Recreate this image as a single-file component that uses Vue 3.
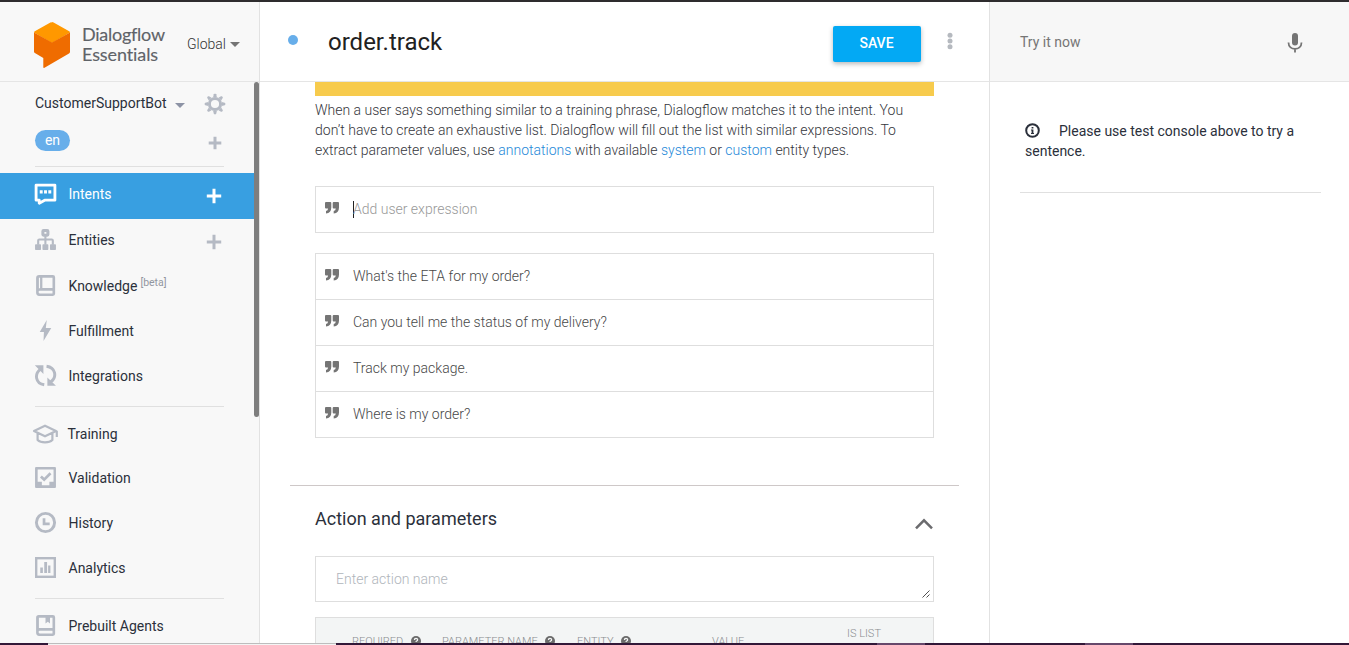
<script setup>
const primary = [
  { label: 'Entities', icon: 'entities', add: true },
  { label: 'Knowledge', icon: 'knowledge', beta: true },
  { label: 'Fulfillment', icon: 'fulfillment' },
  { label: 'Integrations', icon: 'integrations' },
]
const secondary = [
  { label: 'Training', icon: 'training' },
  { label: 'Validation', icon: 'validation' },
  { label: 'History', icon: 'history' },
  { label: 'Analytics', icon: 'analytics' },
]
const phrases = [
  "What's the ETA for my order?",
  'Can you tell me the status of my delivery?',
  'Track my package.',
  'Where is my order?',
]
const columns = [
  { label: 'Required', help: true },
  { label: 'Parameter name', help: true },
  { label: 'Entity', help: true },
  { label: 'Value' },
  { label: 'Is list', top: true },
]
</script>

<template>
  <div class="screen">
    <div class="top-strip"></div>
    <div class="body">
      <aside class="sidebar">
        <header class="brand">
          <svg class="logo" width="38" height="48" viewBox="0 0 38 48">
            <path d="M19 1.5Q18.200 1.100 17.400 1.500L1.800 10.300Q1 10.800 1 11.600L19 22L37 11.600Q37 10.800 36.200 10.300L20.600 1.500Q19.800 1.100 19 1.100Z" fill="#ff9800" />
            <path d="M1 11.400V30.600Q1 31.600 1.900 32.100L10.300 37V46.100Q10.300 47.500 11.500 46.800L36 32.500Q37 31.900 37 30.800V11.400L19 21.600Z" fill="#ef6c00" />
          </svg>
          <div class="brand-name"><span>Dialogflow</span><span class="second">Essentials</span></div>
          <div class="region">Global</div>
          <i class="caret"></i>
        </header>
        <nav class="nav">
          <div class="agent">
            <span class="agent-name">CustomerSupportBot</span>
            <i class="caret agent-caret"></i>
            <svg class="gear" width="22" height="22" viewBox="0 0 22 22">
              <g fill="#b5bac4">
                <path v-for="n in 8" :key="n" d="M9.100 4.200L9.800 1.300Q10 .7 10.500 .7H11.500Q12 .7 12.200 1.300L12.900 4.200Z" :transform="`rotate(${n * 45} 11 11)`" />
              </g>
              <circle cx="11" cy="11" r="5.600" fill="none" stroke="#b5bac4" stroke-width="3" />
            </svg>
          </div>
          <div class="language">
            <span class="chip">en</span>
            <svg class="plus" width="14" height="14" viewBox="0 0 14 14"><path d="M7 .7V13.300M.7 7H13.300" /></svg>
          </div>
          <hr class="rule first" />
          <div class="item active">
            <svg class="icon" width="23" height="23" viewBox="0 0 22 22">
              <path d="M2 2H20V16.400H10.200L5 19.300V16.400H2Z" fill="none" stroke="#fff" stroke-width="2.700" stroke-linejoin="round" />
              <path d="M5.500 7H8.300V10H5.500ZM9.600 7H12.400V10H9.600ZM13.700 7H16.500V10H13.700Z" fill="#fff" />
            </svg>
            <span>Intents</span>
            <svg class="plus big" width="16" height="16" viewBox="0 0 16 16"><path d="M8 .8V15.200M.8 8H15.200" /></svg>
          </div>
          <div v-for="item in primary" :key="item.label" class="item" :class="item.icon">
            <svg v-if="item.icon === 'entities'" class="icon" width="23" height="23" viewBox="0 0 22 22">
              <rect x="8.500" y="2.400" width="4.800" height="4.500" rx=".6" fill="none" stroke="#b5bac4" stroke-width="2.900" />
              <path d="M10.900 7V16M4 16V12Q4 11 5 11H17Q18 11 18 12V16" fill="none" stroke="#b5bac4" stroke-width="2" />
              <path d="M1.700 15.500H6Q6.700 15.500 6.700 16.200V20.300Q6.700 21 6 21H1.700Q1 21 1 20.300V16.200Q1 15.500 1.700 15.500ZM8.800 15.500H13Q13.700 15.500 13.700 16.200V20.300Q13.700 21 13 21H8.800Q8.100 21 8.100 20.300V16.200Q8.100 15.500 8.800 15.500ZM16 15.500H20.300Q21 15.500 21 16.200V20.300Q21 21 20.300 21H16Q15.300 21 15.300 20.300V16.200Q15.300 15.500 16 15.500Z" fill="#b5bac4" />
            </svg>
            <svg v-else-if="item.icon === 'knowledge'" class="icon" width="23" height="23" viewBox="0 0 22 22">
              <path d="M5 1H18Q20.200 1 20.200 3.200V19Q20.200 21 18 21H5Q2 21 2 18V4Q2 1 5 1ZM8 3.600V13.500H17.700V3.600ZM4.700 3.600V13.800L5.800 13.500V3.600ZM5.500 16Q4.400 16 4.400 17.300Q4.400 18.600 5.500 18.600H17.700V16Z" fill="#b5bac4" fill-rule="evenodd" />
            </svg>
            <svg v-else-if="item.icon === 'fulfillment'" class="icon" width="23" height="23" viewBox="0 0 22 22">
              <path d="M12.200 1L5.500 12.500H9.500L9.100 21L16.500 8.500H11.300Z" fill="#b5bac4" />
            </svg>
            <svg v-else class="icon" width="23" height="23" viewBox="0 0 22 22">
              <path d="M6.500 4.600C0 9.500 1.300 18.500 9.800 19.900M12 2.100C20.700 3.300 22.300 12.500 16 17.100" fill="none" stroke="#b5bac4" stroke-width="2.800" />
              <path d="M.8 1.300H9V9.500ZM12.800 12.800V20.800H21Z" fill="#b5bac4" />
            </svg>
            <span>{{ item.label }}</span>
            <sup v-if="item.beta">[beta]</sup>
            <svg v-if="item.add" class="plus big" width="16" height="16" viewBox="0 0 16 16"><path d="M8 .8V15.200M.8 8H15.200" /></svg>
          </div>
          <hr class="rule middle" />
          <div v-for="item in secondary" :key="item.label" class="item" :class="item.icon">
            <svg v-if="item.icon === 'training'" class="icon" width="28" height="22" viewBox="0 0 28 22">
              <path d="M3 8L14 2.700L25 8L14 13.300ZM6.600 10V17C9.800 20.200 18.200 20.200 21.400 17V10M25.800 7.800V14" fill="none" stroke="#b5bac4" stroke-width="2.200" stroke-linejoin="round" />
            </svg>
            <svg v-else-if="item.icon === 'validation'" class="icon" width="23" height="23" viewBox="0 0 22 22">
              <path d="M2 1H20Q21 1 21 2V20Q21 21 20 21H2Q1 21 1 20V2Q1 1 2 1ZM3.500 3.300V15H7.500V18.500H14.700V15H18.700V3.300Z" fill="#b5bac4" fill-rule="evenodd" />
              <path d="M6.600 10.100L9.700 13L15.800 6.900" fill="none" stroke="#b5bac4" stroke-width="2.600" />
            </svg>
            <svg v-else-if="item.icon === 'history'" class="icon" width="23" height="23" viewBox="0 0 22 22">
              <circle cx="11" cy="11" r="8.700" fill="none" stroke="#b5bac4" stroke-width="2.800" />
              <path d="M9.600 7V12.300H15" fill="none" stroke="#b5bac4" stroke-width="2.600" />
            </svg>
            <svg v-else class="icon" width="23" height="23" viewBox="0 0 22 22">
              <rect x="2.100" y="2.100" width="17.800" height="17.800" fill="none" stroke="#b5bac4" stroke-width="2.300" />
              <path d="M6 11H8.500V16.300H6ZM9.800 5.700H12.500V16.300H9.800ZM13.500 9H15.700V16.300H13.500Z" fill="#b5bac4" />
            </svg>
            <span>{{ item.label }}</span>
          </div>
          <hr class="rule last" />
          <div class="item">
            <svg class="icon" width="23" height="23" viewBox="0 0 22 22">
              <path d="M4.500 1H18Q20.200 1 20.200 3.200V19Q20.200 21 18 21H5Q2 21 2 18V3.500Q2 1 4.500 1ZM4.700 3.600V13.500H17.700V3.600H15.300V9L13.200 7.500L11 9V3.600ZM5.500 16Q4.400 16 4.400 17.300Q4.400 18.600 5.500 18.600H17.700V16Z" fill="#b5bac4" fill-rule="evenodd" />
            </svg>
            <span>Prebuilt Agents</span>
          </div>
          <div class="scroll-thumb"></div>
        </nav>
      </aside>

      <main class="main">
        <header class="title-bar">
          <i class="dot"></i>
          <h1>order.track</h1>
          <button class="save">SAVE</button>
          <svg class="more" width="6" height="18" viewBox="0 0 6 18" fill="#b5b9bf"><circle cx="3" cy="3.300" r="2.500" /><circle cx="3" cy="9" r="2.500" /><circle cx="3" cy="14.800" r="2.500" /></svg>
        </header>
        <section class="content">
          <div class="banner"></div>
          <p class="intro">
            When a user says something similar to a training phrase, Dialogflow matches it to the intent. You<br />
            don’t have to create an exhaustive list. Dialogflow will fill out the list with similar expressions. To<br />
            extract parameter values, use <a>annotations</a> with available <a>system</a> or <a>custom</a> entity types.
          </p>
          <div class="list expression">
            <div class="phrase">
              <svg class="quote" width="14" height="12" viewBox="0 0 14 12"><path d="M1 0H5.300Q6.300 0 6.300 1V5.500Q6.300 11 1 11.500V9Q3 8.500 3.100 6.500H1Q0 6.500 0 5.500V1Q0 0 1 0ZM8.700 0H13Q14 0 14 1V5.500Q14 11 8.700 11.500V9Q10.700 8.500 10.800 6.500H8.700Q7.700 6.500 7.700 5.500V1Q7.700 0 8.700 0Z" /></svg>
              <i class="cursor"></i><span class="placeholder">Add user expression</span>
            </div>
          </div>
          <div class="list">
            <div v-for="phrase in phrases" :key="phrase" class="phrase">
              <svg class="quote" width="14" height="12" viewBox="0 0 14 12"><path d="M1 0H5.300Q6.300 0 6.300 1V5.500Q6.300 11 1 11.500V9Q3 8.500 3.100 6.500H1Q0 6.500 0 5.500V1Q0 0 1 0ZM8.700 0H13Q14 0 14 1V5.500Q14 11 8.700 11.500V9Q10.700 8.500 10.800 6.500H8.700Q7.700 6.500 7.700 5.500V1Q7.700 0 8.700 0Z" /></svg>
              <span>{{ phrase }}</span>
            </div>
          </div>
          <hr class="section-rule" />
          <div class="section-head">
            <h2>Action and parameters</h2>
            <svg width="20" height="12" viewBox="0 0 20 12"><path d="M2 10.300L10 2.300L18 10.300" fill="none" stroke="#6b6b6e" stroke-width="2.500" /></svg>
          </div>
          <div class="action">
            <span>Enter action name</span>
            <svg width="8" height="8" viewBox="0 0 8 8"><path d="M.5 7.500L7.500 .5M4.500 7.500L7.500 4.500" stroke="#505050" stroke-width="1" /></svg>
          </div>
          <div class="table-head">
            <div v-for="col in columns" :key="col.label" class="col" :class="{ top: col.top }">
              <span>{{ col.label }}</span>
              <svg v-if="col.help" width="10" height="10" viewBox="0 0 10 10">
                <circle cx="5" cy="5" r="5" fill="#6b6b6b" />
                <path d="M3.500 4Q3.500 2.400 5 2.400Q6.600 2.400 6.600 3.700Q6.600 4.600 5.600 5Q5 5.300 5 6M5 7V8.200" fill="none" stroke="#f3f5f5" stroke-width="1.300" />
              </svg>
            </div>
          </div>
        </section>
      </main>

      <aside class="console">
        <header class="console-bar">
          <span>Try it now</span>
          <svg width="16" height="20" viewBox="0 0 16 20">
            <rect x="5" y="0" width="6" height="12.400" rx="3" fill="#747474" />
            <path d="M1.500 9.500C1.500 18 14.500 18 14.500 9.500M8 15.500V19.500" fill="none" stroke="#747474" stroke-width="1.800" />
          </svg>
        </header>
        <p class="hint">
          <svg width="15" height="15" viewBox="0 0 15 15">
            <circle cx="7.500" cy="7.500" r="6.300" fill="none" stroke="#2b303b" stroke-width="2" />
            <path d="M6.600 3.900H8.400V5.500H6.600ZM6 6.500H8.400V10H9V11H6V10H6.600V7.500H6Z" fill="#2b303b" />
          </svg>Please use test console above to try a<br />sentence.
        </p>
        <hr />
      </aside>
    </div>
    <div class="bottom-strip"><i class="light"></i><i class="tab one"></i><i class="tab two"></i></div>
  </div>
</template>

<style>
body { margin: 0; overflow: hidden; }
</style>

<style scoped>
* { box-sizing: border-box; }
.screen { width: 1349px; height: 645px; display: flex; flex-direction: column; overflow: hidden; background: #fff; font: 400 14px/20px Roboto, "Liberation Sans", sans-serif; color: #2b303b; }
.top-strip { height: 2px; flex: none; background: #2e2c2e; }
.body { height: 641px; display: flex; overflow: hidden; }
hr { border: 0; height: 1px; margin: 0; background: #e0e0e0; }
svg { flex: none; }
.sidebar { width: 260px; flex: none; border-right: 1px solid #e2e2e2; background: #f8f8f8; }
.brand { height: 80px; display: flex; align-items: flex-start; border-bottom: 1px solid #e5e5e5; padding-left: 33px; }
.logo { margin-top: 19px; }
.brand-name { width: 104px; margin: 22px 0 0 11px; display: flex; flex-direction: column; font: 400 18px/20px Lato, sans-serif; letter-spacing: -.25px; color: #5f6368; white-space: nowrap; -webkit-text-stroke: .15px #5f6368; }
.brand-name .second { letter-spacing: -.1px; }
.region { width: 39px; margin: 32px 0 0 1px; font-weight: 300; color: #333; }
.caret { border: 4.500px solid transparent; border-width: 5px 5px 0; border-top-color: #757575; margin: 40px 0 0 4px; }
.nav { position: relative; }
.agent { height: 44px; display: flex; align-items: center; padding-left: 35px; }
.agent-name { width: 140px; position: relative; top: -1px; }
.agent-caret { margin: 2px 0 0; border-top-color: #8d93a5; }
.gear { margin-left: 19px; }
.language { height: 40px; display: flex; align-items: flex-start; padding: 4px 0 0 35px; }
.chip { width: 35px; height: 21px; border-radius: 11px; background: #67aeea; color: #fff; text-align: center; line-height: 20px; }
.plus { fill: none; stroke: #b5bac4; stroke-width: 3; margin: 6px 0 0 138px; }
.rule { margin-left: 35px; width: 189px; }
.rule.middle { margin-top: 8px; margin-bottom: 4px; }
.rule.last { margin-top: 8px; margin-bottom: 4px; }
.item { height: 45px; display: flex; align-items: center; padding-left: 33.500px; }
.icon + span { margin-left: 12px; }
.item.active { height: 46px; margin-top: 6px; padding-bottom: 3px; width: 254px; background: #389fe1; color: #fff; }
.item.active .icon + span { position: relative; top: -1px; }
.plus.big { position: relative; top: 2px; margin: 0 39.500px 0 auto; }
.active .plus { stroke: #fff; }
.active .plus.big { top: 1.500px; margin-right: 32px; }
.item.entities { margin-top: -2px; margin-bottom: 1px; }
.entities .plus.big { margin-right: 37px; }
.item.training { padding-left: 31px; }
.training .icon + span { margin-left: 8.500px; }
.item.validation { margin-top: -1px; }
sup { position: relative; top: -3px; margin-left: 3px; font-size: 10.500px; line-height: 14px; vertical-align: baseline; color: #9296a0; }
.scroll-thumb { position: absolute; left: 254px; top: 0; width: 5px; height: 335px; border-radius: 3px; background: #7e7e7e; }
.main { width: 729px; flex: none; overflow: hidden; }
.title-bar { height: 80px; display: flex; align-items: flex-start; padding-left: 28px; border-bottom: 1px solid #e5e5e5; }
.dot { width: 10px; height: 10px; border-radius: 50%; background: #67aeea; margin-top: 33px; }
h1 { width: 505px; margin: 25px 0 0 30px; font: 400 24px/30px Roboto, sans-serif; color: #212121; }
.save { width: 88px; height: 36px; margin-top: 24px; border: 0; padding: 0 1px 2px 0; border-radius: 2px; background: #03a9f4; color: #fff; font: 500 14px/20px Roboto, sans-serif; box-shadow: 0 2px 5px rgba(0, 0, 0, .28); }
.more { margin: 30px 0 0 26px; }
.content { padding: 0 55px; font-weight: 300; }
.banner { height: 14px; background: #f7cb4d; }
.intro { margin: 4px 0 26px; color: #35363c; white-space: nowrap; }
.intro a { color: #1e88d8; }
.list { border: 1px solid #dedede; color: #484848; }
.expression { margin-bottom: 20px; }
.phrase { height: 45px; display: flex; align-items: center; padding: 0 0 1px 9px; }
.phrase + .phrase { height: 46px; border-top: 1px solid #dedede; }
.quote { margin: 0 14px 2px 0; fill: #757575; }
.cursor { width: 1px; height: 17px; margin-right: -1px; background: #222; }
.placeholder { color: #999; }
.section-rule { margin: 47px -30px 0 -25px; width: 669px; background: #cec8c8; }
.section-head { height: 70px; display: flex; justify-content: space-between; padding: 20px 0 0; }
.section-head svg { margin: 12px 0 0; }
h2 { margin: 0; font: 400 18px/26px Roboto, sans-serif; }
.action { height: 46px; display: flex; align-items: center; justify-content: space-between; border: 1px solid #dedede; padding: 0 3px 0 20px; color: #b0b5bb; }
.action svg { align-self: flex-end; margin-bottom: 3px; }
.table-head { height: 60px; margin-top: 15px; display: grid; grid-template-columns: 90px 135px 135px 135px 86px; padding-left: 36px; border: 1px solid #dedede; background: #f3f5f5; color: #8a8d90; font-size: 11px; line-height: 14px; text-transform: uppercase; }
.col { display: flex; align-items: flex-start; gap: 7.500px; padding-top: 17px; white-space: nowrap; }
.col svg { margin-top: 1px; }
.col.top { padding-top: 9px; }
.console { width: 360px; flex: none; border-left: 1px solid #e2e2e2; }
.console-bar { height: 80px; display: flex; justify-content: space-between; padding: 30px 46px 0 30px; border-bottom: 1px solid #e5e5e5; background: #f7f7f7; color: #757575; }
.console-bar svg { margin-top: .5px; }
.hint { margin: 39px 0 31px 35px; white-space: nowrap; }
.hint svg { vertical-align: -2px; margin-right: 19px; }
.console hr { width: 301px; margin-left: 30px; }
.bottom-strip { height: 2px; flex: none; display: grid; grid-template-columns: 48px 288px 541px 48px 160px 48px 1fr; background: #321838; }
.light { grid-column: 2; background: #f4f4f4; border-top: 1px solid #bdbdbd; }
.tab { background: #66486b; }
.one { grid-column: 4; }
.two { grid-column: 6; }
</style>
